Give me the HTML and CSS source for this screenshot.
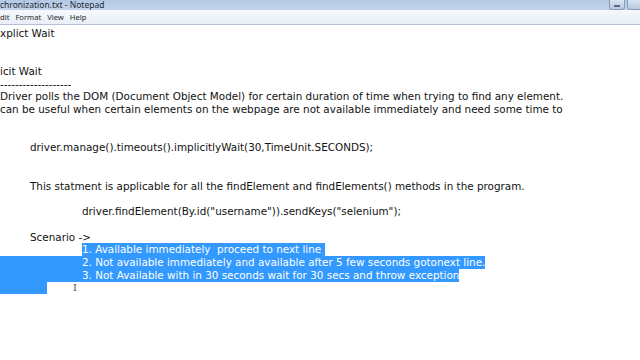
FILE: index.html
```html
<!DOCTYPE html>
<html lang="en">
<head>
    <meta charset="UTF-8">
    <meta name="viewport" content="width=device-width, initial-scale=1.0">
    <title>Synchronization.txt - Notepad</title>
    <link rel="stylesheet" href="styles.css">
</head>
<body>

    <div class="window">
        <div class="titlebar">
            <span class="title">chronization.txt - Notepad</span>
            <div class="buttons">
                <span class="btn btn-min"></span>
                <span class="btn btn-max"></span>
            </div>
        </div>

        <div class="menubar">
            <span>dit</span>
            <span>Format</span>
            <span>View</span>
            <span>Help</span>
        </div>

        <div class="editor">
<div class="line">xplict Wait</div>
<div class="line"></div>
<div class="line"></div>
<div class="line">icit Wait</div>
<div class="line">-------------------</div>
<div class="line">Driver polls the DOM (Document Object Model) for certain duration of time when trying to find any element.</div>
<div class="line">can be useful when certain elements on the webpage are not available immediately and need some time to</div>
<div class="line"></div>
<div class="line"></div>
<div class="line ind1">driver.manage().timeouts().implicitlyWait(30,TimeUnit.SECONDS);</div>
<div class="line"></div>
<div class="line"></div>
<div class="line ind1">This statment is applicable for all the findElement and findElements() methods in the program.</div>
<div class="line"></div>
<div class="line ind2">driver.findElement(By.id("username")).sendKeys("selenium");</div>
<div class="line"></div>
<div class="line ind1">Scenario -&gt;</div>
<div class="line ind2"><span class="sel">1. Available immediately  proceed to next line </span></div>
<div class="line"><span class="sel sel-full">2. Not available immediately and available after 5 few seconds gotonext line.</span></div>
<div class="line"><span class="sel sel-full">3. Not Available with in 30 seconds wait for 30 secs and throw exception</span></div>
<div class="line"><span class="sel sel-tail"></span><span class="ibeam">I</span></div>
        </div>
    </div>

</body>
</html>
```

FILE: styles.css
```css
body {
    margin: 0;
    background: #ffffff;
    overflow: hidden;
}

.window {
    width: 640px;
    height: 360px;
    display: flex;
    flex-direction: column;
}

.titlebar {
    height: 10px;
    background: linear-gradient(to bottom, #b3c8e3, #c4d5ea);
    display: flex;
    align-items: center;
    justify-content: space-between;
    overflow: hidden;
}

.title {
    font-family: "Noto Sans", sans-serif;
    font-size: 8.5px;
    color: #1e2a3a;
    line-height: 10px;
    margin-top: -1px;
}

.buttons {
    display: flex;
    gap: 2px;
    align-self: flex-start;
}

.btn {
    display: block;
    height: 9px;
    border: 1px solid #8a9db6;
    border-top: none;
    border-radius: 0 0 3px 3px;
    background: linear-gradient(to bottom, #d9e4f1, #b7c9df);
    position: relative;
}

.btn-min {
    width: 14px;
}

.btn-min::after {
    content: "";
    position: absolute;
    left: 4px;
    top: 5px;
    width: 6px;
    height: 2px;
    background: #ffffff;
    border: 1px solid #58677c;
    box-sizing: border-box;
}

.btn-max {
    width: 12px;
    border-right: none;
    border-radius: 0 0 0 3px;
}

.menubar {
    height: 14px;
    background: linear-gradient(to bottom, #f5f8fc, #e9eff8);
    border-bottom: 1px solid #b5c0d0;
    display: flex;
    align-items: center;
    gap: 6px;
    font-family: "Noto Sans", sans-serif;
    font-size: 7.6px;
    color: #1e1e1e;
}

.editor {
    flex: 1;
    padding-top: 1.6px;
    font-family: "DejaVu Sans", Verdana, sans-serif;
    font-size: 10.4px;
    color: #111111;
    overflow: hidden;
}

.line {
    height: 12.76px;
    line-height: 12.76px;
    white-space: pre;
}

.ind1 {
    padding-left: 30px;
}

.ind2 {
    padding-left: 82px;
}

.sel {
    display: inline-block;
    height: 12.76px;
    background: #3399ff;
    color: #ffffff;
    vertical-align: top;
}

.sel-full {
    padding-left: 82px;
}

.sel-tail {
    width: 47px;
}

.ibeam {
    position: absolute;
    left: 73px;
    top: 282px;
    font-family: "DejaVu Serif", serif;
    font-size: 10px;
    color: #555555;
}
```
